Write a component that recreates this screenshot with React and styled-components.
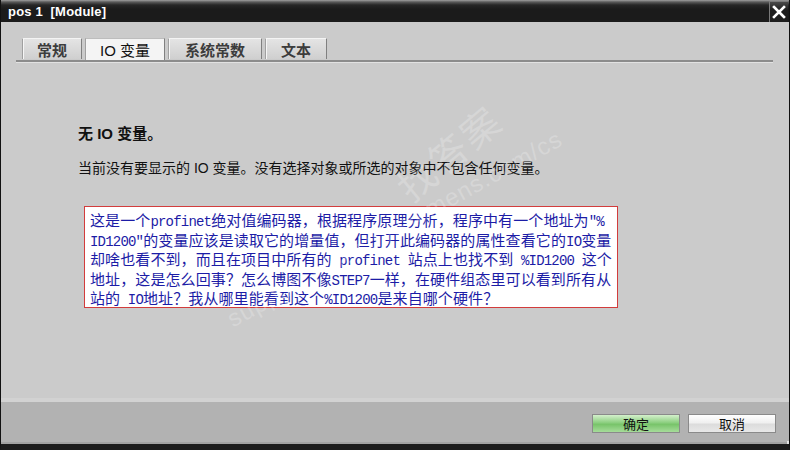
import styled, { createGlobalStyle } from "styled-components";

const GlobalStyle = createGlobalStyle`
  html, body {
    margin: 0;
    padding: 0;
    background: #1c1c1c;
  }
  body {
    font-family: "Liberation Sans", "Noto Sans CJK SC", sans-serif;
  }
`;

const tabs = [
  { label: "常规", width: 60 },
  { label: "IO 变量", width: 80, active: true },
  { label: "系统常数", width: 94 },
  { label: "文本", width: 62 },
];

const questionLines = [
  "这是一个profinet绝对值编码器，根据程序原理分析，程序中有一个地址为″%",
  "ID1200″的变量应该是读取它的增量值，但打开此编码器的属性查看它的IO变量",
  "却啥也看不到，而且在项目中所有的 profinet 站点上也找不到 %ID1200 这个",
  "地址，这是怎么回事？怎么博图不像STEP7一样，在硬件组态里可以看到所有从",
  "站的 IO地址？我从哪里能看到这个%ID1200是来自哪个硬件？",
];

// half-width runs get their own narrower font, like SimSun does
const splitRuns = (line) =>
  line.split(/([\x20-\x7E″]+)/).map((part, i) =>
    /^[\x20-\x7E″]+$/.test(part) ? <Latin key={i}>{part}</Latin> : part
  );

const App = () => {
  return (
    <>
      <GlobalStyle />
      <Window>
        <TitleBar>
          <Title>pos 1 &nbsp;[Module]</Title>
          <CloseButton>
            <svg width="14" height="14" viewBox="0 0 14 14">
              <path d="M2 2 L12 12 M12 2 L2 12" stroke="#fff" strokeWidth="2.6" strokeLinecap="square" />
            </svg>
          </CloseButton>
        </TitleBar>

        <Body>
          <TabStrip>
            {tabs.map((t) => (
              <Tab key={t.label} $width={t.width} $active={t.active}>
                {t.label}
              </Tab>
            ))}
          </TabStrip>

          <Content>
            <Heading>无 IO 变量。</Heading>
            <Description>当前没有要显示的 IO 变量。没有选择对象或所选的对象中不包含任何变量。</Description>
            <QuestionBox>
              {questionLines.map((line) => (
                <QuestionLine key={line}>{splitRuns(line)}</QuestionLine>
              ))}
            </QuestionBox>
          </Content>

          <WatermarkBig>找答案</WatermarkBig>
          <WatermarkSmall>support.industry.siemens.com/cs</WatermarkSmall>
        </Body>

        <Footer>
          <Button $primary>确定</Button>
          <Button>取消</Button>
          <Grip>
            <svg width="7" height="7" viewBox="0 0 7 7">
              <path d="M6 0 V6 H0" stroke="#fff" strokeWidth="1.4" fill="none" />
            </svg>
          </Grip>
        </Footer>
      </Window>
    </>
  );
};

export default App;

const Window = styled.div`
  width: 790px;
  height: 450px;
  box-sizing: border-box;
  display: flex;
  flex-direction: column;
  background: #cbcbcb;
  border-left: 1px solid #111;
  border-right: 1px solid #111;
  border-bottom: 6px solid #1c1c1c;
  position: relative;
  overflow: hidden;
`;

const TitleBar = styled.div`
  height: 22px;
  flex: none;
  display: flex;
  align-items: center;
  justify-content: space-between;
  background: linear-gradient(#a0a0a0 0px, #5a5a5a 2px, #262626 5px, #1b1b1b 9px, #1b1b1b 100%);
  padding-left: 7px;
`;

const Title = styled.span`
  color: #fff;
  font-family: "Liberation Sans", sans-serif;
  font-weight: bold;
  font-size: 13px;
  letter-spacing: 0.2px;
  padding-top: 1px;
`;

const CloseButton = styled.div`
  width: 19px;
  height: 21px;
  margin-right: 1px;
  align-self: flex-end;
  box-sizing: border-box;
  display: flex;
  align-items: center;
  justify-content: center;
  background: linear-gradient(#4a4a4a, #1e1e1e 40%, #1e1e1e);
  border-left: 1px solid #7a7a7a;
  border-top: 1px solid #7a7a7a;
`;

const Body = styled.div`
  flex: 1;
  position: relative;
  padding: 16px 16px 0 15px;
  display: flex;
  flex-direction: column;
`;

const TabStrip = styled.div`
  display: flex;
  align-items: flex-end;
  gap: 3px;
  padding-left: 6px;
  height: 22px;
  border-bottom: 2px solid #8c8c8c;
  box-shadow: 0 1px 0 #e2e2e2;
`;

const Tab = styled.div`
  width: ${(p) => p.$width}px;
  height: ${(p) => (p.$active ? 22 : 21)}px;
  box-sizing: border-box;
  display: flex;
  align-items: center;
  justify-content: center;
  font-family: "Liberation Sans", "Noto Sans CJK SC", sans-serif;
  font-size: 15px;
  color: ${(p) => (p.$active ? "#111" : "#3c3c3c")};
  font-weight: ${(p) => (p.$active ? "normal" : "bold")};
  background: ${(p) => (p.$active ? "#f4f4f4" : "linear-gradient(#e4e4e4, #cfcfcf)")};
  border-top: 1px solid ${(p) => (p.$active ? "#bdbdbd" : "#f4f4f4")};
  border-left: 1px solid #a0a0a0;
  border-right: 1px solid #808080;
  margin-bottom: ${(p) => (p.$active ? "0" : "1px")};
  box-shadow: inset 1px 0 0 #f6f6f6;
`;

const Content = styled.div`
  display: flex;
  flex-direction: column;
  align-items: flex-start;
  padding-left: 62px;
  padding-top: 63px;
`;

const Heading = styled.div`
  font-family: "Liberation Sans", "Noto Sans CJK SC", sans-serif;
  font-weight: bold;
  font-size: 15px;
  color: #111;
  line-height: 18px;
`;

const Description = styled.div`
  margin-top: 16px;
  font-family: "Liberation Sans", "Noto Sans CJK SC", sans-serif;
  font-size: 14px;
  color: #111;
  line-height: 18px;
`;

const QuestionBox = styled.div`
  margin-top: 29px;
  margin-left: 6px;
  width: 534px;
  height: 102px;
  box-sizing: border-box;
  background: #fff;
  border: 1px solid #d23c3c;
  padding: 3px 0 0 5px;
`;

const QuestionLine = styled.div`
  height: 19.5px;
  font-family: "Noto Sans CJK SC", sans-serif;
  font-size: 15px;
  line-height: 19.5px;
  letter-spacing: 0.1px;
  color: #1c1ca6;
  white-space: pre;
`;

const Latin = styled.span`
  font-family: "Liberation Mono", monospace;
  font-size: 14px;
  line-height: 1;
  letter-spacing: -0.8px;
`;

const WatermarkBig = styled.div`
  position: absolute;
  left: 386px;
  top: 110px;
  font-family: "Noto Sans CJK SC", sans-serif;
  font-size: 38px;
  line-height: 40px;
  letter-spacing: 3px;
  color: rgba(255, 255, 255, 0.22);
  transform: rotate(-40deg);
  pointer-events: none;
`;

const WatermarkSmall = styled.div`
  position: absolute;
  left: 235px;
  top: 283px;
  font-family: "Liberation Sans", sans-serif;
  font-size: 24px;
  line-height: 28px;
  letter-spacing: 1px;
  color: rgba(255, 255, 255, 0.22);
  white-space: nowrap;
  transform-origin: 0 100%;
  transform: rotate(-29deg);
  pointer-events: none;
`;

const Footer = styled.div`
  height: 46px;
  flex: none;
  box-sizing: border-box;
  display: flex;
  align-items: center;
  justify-content: flex-end;
  gap: 8px;
  padding-right: 13px;
  background: #b2b2b2;
  border-top: 4px solid #d2d2d2;
  border-bottom: 2px solid #a2a2a2;
  position: relative;
`;

const Button = styled.div`
  width: 88px;
  height: 19px;
  box-sizing: border-box;
  display: flex;
  align-items: center;
  justify-content: center;
  margin-top: 2px;
  font-family: "Liberation Sans", "Noto Sans CJK SC", sans-serif;
  font-size: 13px;
  color: #111;
  border: 1px solid #8a8a8a;
  background: ${(p) =>
    p.$primary
      ? "linear-gradient(#d4f0cc, #8ccf80 45%, #78c46a 55%, #a6dc9a)"
      : "linear-gradient(#ffffff, #f0f0f0 45%, #dcdcdc 55%, #e8e8e8)"};
`;

const Grip = styled.div`
  position: absolute;
  right: 0;
  bottom: -6px;
  width: 7px;
  height: 7px;
  line-height: 0;
`;
